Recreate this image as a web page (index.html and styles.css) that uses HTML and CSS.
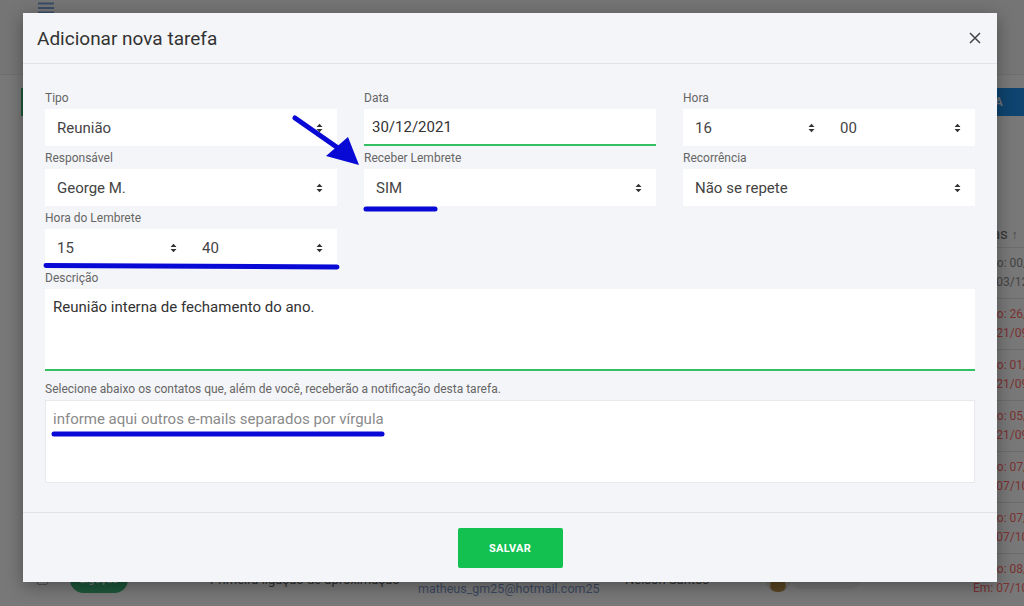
FILE: index.html
```html
<!DOCTYPE html>
<html lang="pt-BR">
<head>
<meta charset="utf-8">
<title>Adicionar nova tarefa</title>
<link rel="stylesheet" href="styles.css">
</head>
<body>
<div class="page">
  <header class="topbar">
    <svg class="burger" width="16" height="14" viewBox="0 0 16 14"><path d="M0 2.5h16M0 7h16M0 11.5h16" stroke="currentColor" stroke-width="2"/></svg>
  </header>
  <div class="toolbar">
    <button class="btn-outline">Filtrar</button>
    <button class="btn-blue">ADICIONAR TAREFA</button>
  </div>
  <div class="table">
    <div class="thead">
      <span class="th-date">Datas <span class="sort">↑</span></span>
    </div>
    <div class="row"><span class="chk"></span><span class="pill">Ligação</span><span class="title">Apresentação</span><span class="contact"><span>Ana P.</span><span>ana@empresa.com</span></span><span class="name">Nelson Santos</span><span class="who"><span class="avatar"></span><span class="badge"></span></span><span class="c-date gray"><span>Prazo: 00/00/0000</span><span>Em: 03/12/2021</span></span></div>
    <div class="row"><span class="chk"></span><span class="pill">Ligação</span><span class="title">Retorno</span><span class="contact"><span>Carlos R.</span><span>carlos@empresa.com</span></span><span class="name">Nelson Santos</span><span class="who"><span class="avatar"></span><span class="badge"></span></span><span class="c-date"><span>Prazo: 26/09/2021</span><span>Em: 21/09/2021</span></span></div>
    <div class="row"><span class="chk"></span><span class="pill">Ligação</span><span class="title">Follow-up</span><span class="contact"><span>Bruna L.</span><span>bruna@empresa.com</span></span><span class="name">Nelson Santos</span><span class="who"><span class="avatar"></span><span class="badge"></span></span><span class="c-date"><span>Prazo: 01/10/2021</span><span>Em: 21/09/2021</span></span></div>
    <div class="row"><span class="chk"></span><span class="pill">Ligação</span><span class="title">Proposta</span><span class="contact"><span>Diego F.</span><span>diego@empresa.com</span></span><span class="name">Nelson Santos</span><span class="who"><span class="avatar"></span><span class="badge"></span></span><span class="c-date"><span>Prazo: 05/10/2021</span><span>Em: 21/09/2021</span></span></div>
    <div class="row"><span class="chk"></span><span class="pill">Ligação</span><span class="title">Reunião</span><span class="contact"><span>Eva M.</span><span>eva@empresa.com</span></span><span class="name">Nelson Santos</span><span class="who"><span class="avatar"></span><span class="badge"></span></span><span class="c-date"><span>Prazo: 07/10/2021</span><span>Em: 07/10/2021</span></span></div>
    <div class="row"><span class="chk"></span><span class="pill">Ligação</span><span class="title">Contato</span><span class="contact"><span>Fábio T.</span><span>fabio@empresa.com</span></span><span class="name">Nelson Santos</span><span class="who"><span class="avatar"></span><span class="badge"></span></span><span class="c-date"><span>Prazo: 07/10/2021</span><span>Em: 07/10/2021</span></span></div>
    <div class="row"><span class="chk"></span><span class="pill">Ligação</span><span class="title">Primeira ligação de aproximação</span><span class="contact"><span>Matheus G.</span><span>matheus_gm25@hotmail.com25</span></span><span class="name">Nelson Santos</span><span class="who"><span class="avatar"></span><span class="badge"></span></span><span class="c-date"><span>Prazo: 08/10/2021</span><span>Em: 07/10/2021</span></span></div>
  </div>
</div>

<div class="overlay"></div>

<div class="modal" role="dialog">
  <div class="modal-header">
    <h2 class="modal-title">Adicionar nova tarefa</h2>
    <button class="close" aria-label="Fechar"><svg width="12" height="12" viewBox="0 0 12 12"><path d="M1 1L11 11M11 1L1 11" stroke="#444" stroke-width="1.5"/></svg></button>
  </div>
  <div class="modal-body">
    <div class="fields">
      <div class="field">
        <label>Tipo</label>
        <div class="select"><span>Reunião</span><svg class="arr" width="7" height="10" viewBox="0 0 7 10"><path d="M0.5 4L3.5 0.8L6.5 4ZM0.5 6L3.5 9.2L6.5 6Z"/></svg></div>
      </div>
      <div class="field">
        <label>Data</label>
        <div class="input active">30/12/2021</div>
      </div>
      <div class="field">
        <label>Hora</label>
        <div class="split">
          <div class="select"><span>16</span><svg class="arr" width="7" height="10" viewBox="0 0 7 10"><path d="M0.5 4L3.5 0.8L6.5 4ZM0.5 6L3.5 9.2L6.5 6Z"/></svg></div>
          <div class="select second"><span>00</span><svg class="arr" width="7" height="10" viewBox="0 0 7 10"><path d="M0.5 4L3.5 0.8L6.5 4ZM0.5 6L3.5 9.2L6.5 6Z"/></svg></div>
        </div>
      </div>
      <div class="field">
        <label>Responsável</label>
        <div class="select"><span>George M.</span><svg class="arr" width="7" height="10" viewBox="0 0 7 10"><path d="M0.5 4L3.5 0.8L6.5 4ZM0.5 6L3.5 9.2L6.5 6Z"/></svg></div>
      </div>
      <div class="field">
        <label>Receber Lembrete</label>
        <div class="select"><span>SIM</span><svg class="arr" width="7" height="10" viewBox="0 0 7 10"><path d="M0.5 4L3.5 0.8L6.5 4ZM0.5 6L3.5 9.2L6.5 6Z"/></svg></div>
      </div>
      <div class="field">
        <label>Recorrência</label>
        <div class="select"><span>Não se repete</span><svg class="arr" width="7" height="10" viewBox="0 0 7 10"><path d="M0.5 4L3.5 0.8L6.5 4ZM0.5 6L3.5 9.2L6.5 6Z"/></svg></div>
      </div>
      <div class="field">
        <label>Hora do Lembrete</label>
        <div class="split">
          <div class="select"><span>15</span><svg class="arr" width="7" height="10" viewBox="0 0 7 10"><path d="M0.5 4L3.5 0.8L6.5 4ZM0.5 6L3.5 9.2L6.5 6Z"/></svg></div>
          <div class="select second"><span>40</span><svg class="arr" width="7" height="10" viewBox="0 0 7 10"><path d="M0.5 4L3.5 0.8L6.5 4ZM0.5 6L3.5 9.2L6.5 6Z"/></svg></div>
        </div>
      </div>
    </div>
    <div class="field desc">
      <label>Descrição</label>
      <div class="textarea">Reunião interna de fechamento do ano.</div>
    </div>
    <div class="field emails">
      <label>Selecione abaixo os contatos que, além de você, receberão a notificação desta tarefa.</label>
      <div class="tagbox"><span class="placeholder">informe aqui outros e-mails separados por vírgula</span></div>
    </div>
  </div>
  <div class="modal-footer">
    <button class="btn-save">SALVAR</button>
  </div>
</div>

<svg class="annot" width="1024" height="606" viewBox="0 0 1024 606">
  <g stroke="#0909d6" stroke-width="5" stroke-linecap="round" fill="none">
    <path d="M295 118L338 148"/>
    <path d="M366 209L435 209"/>
    <path d="M46 265.5L337 267"/>
    <path d="M54 434L382 434"/>
  </g>
  <polygon points="326,156 348,137 359,165" fill="#0909d6"/>
</svg>
</body>
</html>
```

FILE: styles.css
```css
* { box-sizing: border-box; margin: 0; padding: 0; }
html, body { width: 1024px; height: 606px; overflow: hidden; }
body {
  position: relative;
  font-family: Roboto, "Liberation Sans", Arial, sans-serif;
  background: #fff;
  color: #333;
}

/* ---------- background page ---------- */
.page { width: 1024px; height: 606px; overflow: hidden; background: #fafafa; }
.topbar { height: 75px; border-bottom: 1px solid #e6e6e6; padding: 1px 0 0 38px; background: #f4f4f4; }
.burger { display: block; color: #7a9fd6; }
.toolbar { display: flex; justify-content: space-between; align-items: center; margin-top: 13px; height: 28px; }
.btn-outline {
  margin-left: 21px; height: 28px; padding: 0 14px;
  border: 2px solid #3cb371; background: #fff; color: #3cb371;
  font: 500 12px Roboto, sans-serif;
}
.btn-blue {
  height: 28px; padding: 0 21px 0 16px; border: 0;
  background: #1e8fe8; color: #e8f2ff;
  font: 500 12px Roboto, sans-serif; letter-spacing: .3px;
}
.table { margin: 104px 0 0 23px; }
.thead, .row {
  display: grid;
  grid-template-columns: 14px 33px 140px 208px 207px 140px 208px 1fr;
  align-items: center;
}
.thead { height: 27px; }
.th-date { grid-column: 8; font-size: 15px; color: #6f6f6f; white-space: nowrap; margin-left: -4px; }
.sort { font-size: 12px; color: #8a8a8a; }
.row { height: 51px; border-top: 1px solid #e2e2e2; font-size: 13px; color: #555; }
.chk { grid-column: 2; width: 11px; height: 11px; border: 1px solid #aaa; background: #fff; border-radius: 2px; }
.pill {
  width: 58px; height: 27px; border-radius: 14px; background: #3db378;
  color: #fff; font-size: 11px; display: flex; align-items: center; justify-content: center;
}
.title { white-space: nowrap; color: #666; }
.contact, .c-date { display: flex; flex-direction: column; line-height: 19px; white-space: nowrap; }
.contact span:last-child { color: #7d97c8; font-size: 12.5px; }
.name { color: #666; white-space: nowrap; }
.who { display: flex; align-items: center; }
.avatar { width: 26px; height: 26px; border-radius: 50%; background: radial-gradient(circle at 50% 75%, #b98e45 0 30%, #ece6d8 36%); }
.badge { width: 70px; height: 20px; border-radius: 10px; background: #f0f0f0; }
.c-date { font-size: 12px; color: #ff6a6a; }
.c-date.gray { color: #8e8e8e; }

.overlay { position: absolute; inset: 0; background: rgba(0, 0, 0, .52); }

/* ---------- modal ---------- */
.modal {
  position: absolute; top: 13px; left: 23px; width: 974px;
  background: #f4f5f8;
  box-shadow: 0 4px 16px rgba(0, 0, 0, .35);
}
.modal-header {
  height: 51px; display: flex; align-items: center; justify-content: space-between;
  padding: 0 16px 0 14px; border-bottom: 1px solid #e2e3e8;
}
.modal-title { font-size: 19px; font-weight: 400; color: #333; }
.close { background: none; border: 0; width: 12px; height: 12px; display: flex; }

.modal-body { padding: 27px 22px 29px; }
.fields { display: grid; grid-template-columns: repeat(3, 292px); column-gap: 27px; row-gap: 5px; }
.field label { display: block; font-size: 12px; line-height: 14px; color: #666; margin-bottom: 4px; white-space: nowrap; }
.select, .input {
  height: 37px; background: #fff; display: flex; align-items: center;
  font-size: 15px; color: #444;
}
.select { justify-content: space-between; padding: 0 14px 0 12px; }
.select .arr { fill: #333; flex: none; }
.input { padding: 0 8px; color: #333; }
.input.active { border-bottom: 2px solid #33c062; }
.split { display: grid; grid-template-columns: 1fr 1fr; }
.split .second { padding-left: 11px; }

.desc { margin-top: 5px; }
.textarea {
  height: 82px; background: #fff; border-bottom: 2px solid #33c062;
  padding: 9px 8px; font-size: 15px; line-height: 18px; color: #333;
}
.emails { margin-top: 11px; }
.tagbox {
  height: 83px; background: #fff; border: 1px solid #e8e9ec;
  padding: 9px 7px; font-size: 15px; line-height: 18px;
}
.placeholder { color: #8a8a8a; }

.modal-footer {
  border-top: 1px solid #e2e3e8; padding: 15px 0 14px;
  display: flex; justify-content: center;
}
.btn-save {
  width: 105px; height: 40px; border: 0; border-radius: 2px;
  background: #12c150; color: #fff;
  font: 700 11px Roboto, sans-serif; letter-spacing: .3px;
}

.annot { position: absolute; top: 0; left: 0; pointer-events: none; }
```
